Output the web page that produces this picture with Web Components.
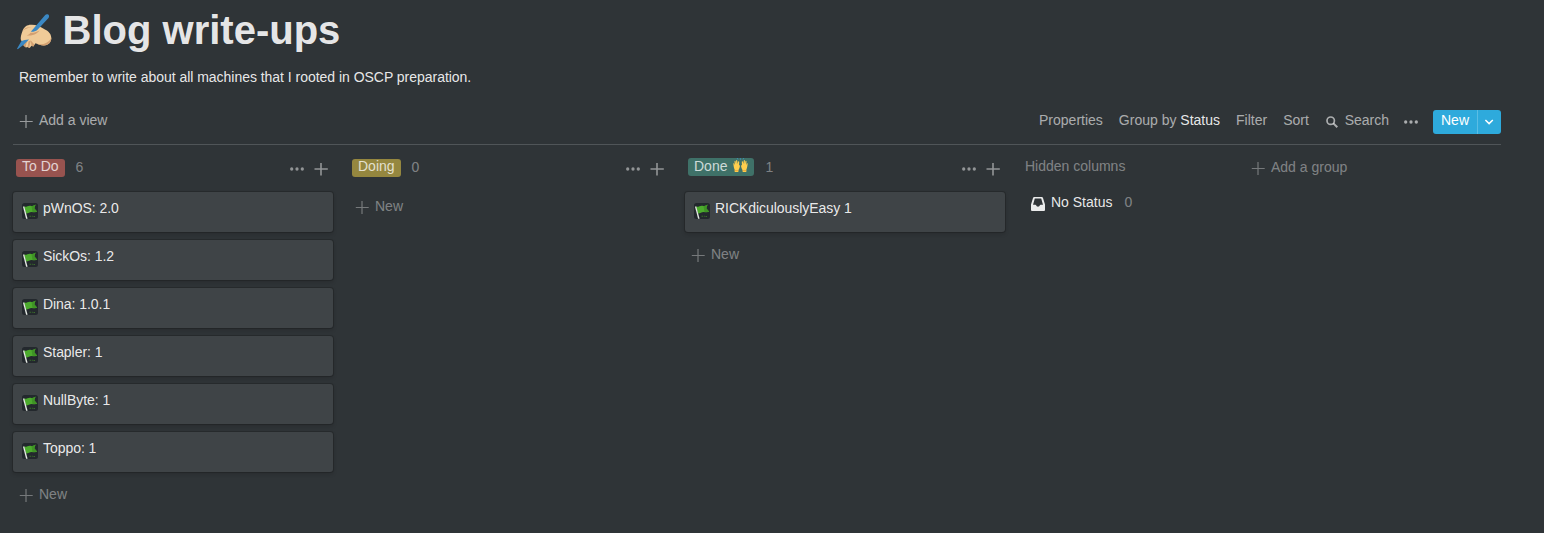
<!DOCTYPE html>
<html lang="en">
<head>
<meta charset="utf-8">
<title>Blog write-ups</title>
<style>
  html, body { margin: 0; height: 100%; background: #2f3437; overflow: hidden; }
  body { font: 14px/21px "Liberation Sans", Arial, sans-serif; color: rgba(255,255,255,.9); }
</style>
</head>
<body>
<blog-page></blog-page>
<script>
const define = (name, html) => {
  const tpl = document.createElement('template');
  tpl.innerHTML = html;
  customElements.define(name, class extends HTMLElement {
    constructor() {
      super();
      this.attachShadow({ mode: 'open' }).appendChild(tpl.content.cloneNode(true));
    }
  });
};

/* ---------- icons ---------- */
const ICONS = {
  plus: [13, 13, '<path d="M5.4 0h1.2v5.9h6.100v1.200H6.600V13H5.400V7.100H-.2V5.900H5.400z" fill="currentColor" opacity=".85"/>'],
  plusBold: [13, 13, '<path d="M5.2 0h1.600v5.200h6v1.600h-6V12.600H5.200V6.800H-.5V5.200h5.700z" fill="currentColor"/>'],
  dots: [14, 4, '<g fill="currentColor"><circle cx="1.7" cy="2" r="1.65"/><circle cx="7" cy="2" r="1.65"/><circle cx="12.3" cy="2" r="1.65"/></g>'],
  search: [12, 12, '<g fill="none" stroke="currentColor"><circle cx="4.7" cy="4.7" r="3.7" stroke-width="1.7"/><path d="M7.4 7.4l3.9 3.9" stroke-width="2"/></g>'],
  chevron: [9, 6, '<path d="M.4 1l3.7 3.6L7.8 1" fill="none" stroke="currentColor" stroke-width="1.5"/>'],
  tray: [14, 14, '<path fill="currentColor" fill-rule="evenodd" d="M3.2 0H10.8Q11.7 0 12 .9L14 7.6V13Q14 14 13 14H1Q0 14 0 13V7.6L2 .9Q2.3 0 3.2 0zM3.8 1.5L2 7.700H4.400Q5 7.700 5.100 8.300Q5.500 9.700 7 9.700Q8.500 9.700 8.900 8.300Q9 7.700 9.600 7.700H12L10.200 1.500z"/>'],
  flag: [16, 16, '<rect width="16" height="16" rx="2.5" fill="#23282d"/><path d="M1.800 3.600C4.500 4.600 6 2.200 8.500 2.800C10.500 3.300 12 3 13.600 1.600L12.300 5.200L15.200 8.700C13.500 9.500 11.500 9 9.500 8.900C7.500 8.900 6.500 10.400 4 10.400z" fill="#4cab2d"/><path d="M9.500 2.900C11 3.300 12.300 2.800 13.600 1.600L12.300 5.200L15.200 8.700C13.500 9.400 12 9 10.500 8.900z" fill="#3f9425"/><path d="M1 3.700L2.200 3.300L5.600 15.700H4.100z" fill="#e6eae5"/><path d="M7.500 13.200h1.700M10 13.200h.8M11.500 13.500h1.500" stroke="#3a6b2b" stroke-width="1.1"/>'],
  hands: [15, 15, '<g fill="#ffcf4d"><path d="M.4 6.200C0 5.300 1 5 1.300 5.800l.6 1.400L1.500 3.500c-.1-.9.900-1 1.100-.2l.5 2.600V2.700c0-.8 1.100-.8 1.200 0l.3 3.400.5-2.300c.2-.8 1.200-.6 1.100.2L6 8.200l.3-.8c.3-.7.8-.4.7.2-.2 1.900-.7 3.400-1.500 4.300L5.300 14H1.700l-.1-2.500C.8 10 .7 8 .4 6.200z"/><path d="M14.600 6.200c.4-.9-.6-1.200-.9-.4l-.6 1.400.4-3.700c.1-.9-.9-1-1.100-.2l-.5 2.600V2.700c0-.8-1.100-.8-1.200 0l-.3 3.400-.5-2.300c-.2-.8-1.200-.6-1.100.2L9 8.200l-.3-.8c-.3-.7-.8-.4-.7.2.2 1.900.7 3.400 1.500 4.300l.2 2.100h3.600l.1-2.500c.8-1.500.9-3.500 1.200-5.300z"/></g><path d="M4.200 0l.7 1.500M10.800 0l-.7 1.500M7.500 .2v1.600" stroke="#3f91b5" stroke-width=".9"/><path d="M1.800 12.600h3.500M9.700 12.600h3.500" stroke="#e69a35" stroke-width=".7"/>'],
  writing: [36, 36, '<path d="M6.500 17C8 12.500 11.500 10.500 15.500 10.700C20 10.600 24.500 12.500 28.500 15.200C32.500 17 35.500 20 35.300 24.500C35 28.500 32 31.300 28 31.500C25 31.600 22 30 19.500 29.200L17.300 32.500L15.500 31.800L13.700 34L11.500 33L10 33.500L7.500 31.500L8 28L5 26.500C4 23.500 5.500 20 6.500 17z" fill="#f0cb98"/><path d="M19.500 29.200C23.500 30.600 27 30.600 30 29C33 27.500 34.600 25.700 35.300 23.500C35.600 28 32.500 31.400 28 31.500C25 31.600 22 30 19.500 29.200zM8 28L12.500 25.500L10.500 29L9.700 33.400L7.500 31.500zM14.800 26.500L18.500 30.700L17.300 32.500L15.500 31.800zM12.500 27.500L14.800 26.500L13.200 33.700L11.500 33zM14.500 18.800C17.500 19 20 18.300 23.500 16.500C21 20 17 21.700 10.500 21.700C12 21.200 13.500 20.300 14.500 18.800zM6.500 17C8 14.200 11 12.800 15.500 13.300C11.500 13.900 8.500 15.300 6.500 17z" fill="#d3a071"/><path d="M29 1.200C29.900 .1 31.300-.2 32.300.6C33.300 1.400 33.400 2.800 32.500 3.900L21.500 15.700C19.800 17.200 17.200 18.100 14.800 17.800z" fill="#3b88c3"/><path d="M5.300 27.200C7.500 26 9.800 25.700 13 25.500L8.200 30.200L1.700 35.300L1 34.700z" fill="#3b88c3"/>']
};
customElements.define('ui-icon', class extends HTMLElement {
  constructor() { super(); this.attachShadow({ mode: 'open' }); }
  connectedCallback() {
    const [w, h, body] = ICONS[this.getAttribute('name')];
    this.shadowRoot.innerHTML = `<style>:host{display:block;flex:none}svg{display:block;overflow:visible}</style>
      <svg width="${w}" height="${h}" viewBox="0 0 ${w} ${h}">${body}</svg>`;
  }
});

/* ---------- header ---------- */
define('page-header', `
  <style>
    :host { display: block; padding: 6px 0 0 16px; }
    .row { display: flex; align-items: flex-start; height: 48px; gap: 10.6px; }
    ui-icon { margin-top: 8px; }
    h1 { margin: 0; font-size: 40px; line-height: 48px; font-weight: 700; white-space: nowrap; }
    p { margin: 13px 0 0 3px; letter-spacing: -.028px; }
  </style>
  <div class="row"><ui-icon name="writing"></ui-icon><h1><slot name="title"></slot></h1></div>
  <p><slot></slot></p>`);

/* ---------- toolbar ---------- */
define('split-button', `
  <style>
    :host { display: flex; width: 68px; height: 24px; border-radius: 3px; background: #2eaadc; color: #fff; overflow: hidden; }
    .main { box-sizing: border-box; width: 44px; padding-left: 8px; line-height: 21px; }
    .more { flex: 1; display: flex; align-items: center; justify-content: center; border-left: 1px solid #5bbde4; }
  </style>
  <span class="main"><slot></slot></span><span class="more"><ui-icon name="chevron"></ui-icon></span>`);

define('board-toolbar', `
  <style>
    :host { display: flex; box-sizing: border-box; height: 35px; margin: 22px 43px 0 13px; padding-left: 7px;
            border-bottom: 1px solid #505558; color: rgba(255,255,255,.6); white-space: nowrap; align-items: flex-start; }
    .add, .right, .search { display: flex; align-items: flex-start; }
    .add { gap: 6px; } .add ui-icon { margin-top: 5px; }
    .right { margin-left: auto; gap: 16px; }
    .search { gap: 7px; margin-left: .8px; } .search ui-icon { margin-top: 6px; }
    .dots { margin: 10px -1px 0 -1px; }
    b { font-weight: 400; color: rgba(255,255,255,.9); }
  </style>
  <span class="add"><ui-icon name="plus"></ui-icon><span>Add a view</span></span>
  <div class="right">
    <span>Properties</span><span>Group by <b>Status</b></span><span>Filter</span><span>Sort</span>
    <span class="search"><ui-icon name="search"></ui-icon><span>Search</span></span>
    <ui-icon class="dots" name="dots"></ui-icon>
    <split-button>New</split-button>
  </div>`);

/* ---------- board ---------- */
define('status-tag', `
  <style>
    :host { display: flex; height: 18px; line-height: var(--tag-line, 14px); padding: 0 6px; border-radius: 3px; background: var(--tag); white-space: nowrap; gap: 6px; color: rgba(255,255,255,.75); }
  </style>
  <slot></slot>`);

define('board-card', `
  <style>
    :host { display: flex; box-sizing: border-box; height: 40px; padding: 6px 9px; gap: 5px; border-radius: 3px; background: #3f4447;
            box-shadow: 0 0 0 1px rgba(15,15,15,.22), 0 2px 4px rgba(15,15,15,.2); margin-bottom: 8px; white-space: nowrap; letter-spacing: -.05px; }
    ui-icon { margin-top: 5px; }
  </style>
  <ui-icon name="flag"></ui-icon><span><slot></slot></span>`);

define('add-row', `
  <style>
    :host { display: flex; gap: 6px; padding-left: 7px; color: rgba(255,255,255,.4); white-space: nowrap; }
    ui-icon { margin-top: 5px; }
  </style>
  <ui-icon name="plus"></ui-icon><span><slot></slot></span>`);

define('board-column', `
  <style>
    :host { display: block; width: 320px; margin-right: 16px; flex: none; }
    header { display: flex; height: 33px; padding-left: 3px; align-items: flex-start; color: rgba(255,255,255,.4); }
    .tag { margin-top: var(--tag-top, 0px); }
    .count { margin-left: 11px; margin-top: -2px; }
    .dots { margin: 8px 11px 0 auto; color: rgba(255,255,255,.48); }
    .plus { margin: 4px 5px 0 0; color: rgba(255,255,255,.48); }
    .cards { display: flex; flex-direction: column; }
    add-row { padding-top: 4px; }
  </style>
  <header><span class="tag"><slot name="tag"></slot></span><span class="count"><slot name="count"></slot></span>
    <ui-icon class="dots" name="dots"></ui-icon><ui-icon class="plus" name="plusBold"></ui-icon></header>
  <div class="cards"><slot></slot></div>
  <add-row>New</add-row>`);

define('hidden-columns', `
  <style>
    :host { display: block; width: 220px; margin-left: 4px; margin-top: -3px; flex: none; color: rgba(255,255,255,.4); }
    .row { display: flex; margin-top: 15px; padding-left: 6px; }
    ui-icon { margin: 5px 6px 0 0; color: rgba(255,255,255,.9); }
    b { font-weight: 400; color: rgba(255,255,255,.9); margin-right: 12px; }
  </style>
  <div>Hidden columns</div>
  <div class="row"><ui-icon name="tray"></ui-icon><b>No Status</b><span>0</span></div>`);

define('blog-page', `
  <style>
    :host { display: block; width: 1544px; height: 533px; overflow: hidden; }
    .board { display: flex; align-items: flex-start; padding: 14px 0 0 13px; }
    .group { margin-top: -2px; }
  </style>
  <page-header><span slot="title">Blog write-ups</span>Remember to write about all machines that I rooted in OSCP preparation.</page-header>
  <board-toolbar></board-toolbar>
  <div class="board">
    <board-column>
      <status-tag slot="tag" style="--tag:#98534f">To Do</status-tag><span slot="count">6</span>
      <board-card>pWnOS: 2.0</board-card>
      <board-card>SickOs: 1.2</board-card>
      <board-card>Dina: 1.0.1</board-card>
      <board-card>Stapler: 1</board-card>
      <board-card>NullByte: 1</board-card>
      <board-card>Toppo: 1</board-card>
    </board-column>
    <board-column>
      <status-tag slot="tag" style="--tag:#95873f">Doing</status-tag><span slot="count">0</span>
    </board-column>
    <board-column style="--tag-top:-1px">
      <status-tag slot="tag" style="--tag:#3f7168;--tag-line:16px"><span>Done</span><ui-icon name="hands"></ui-icon></status-tag><span slot="count">1</span>
      <board-card>RICKdiculouslyEasy 1</board-card>
    </board-column>
    <hidden-columns></hidden-columns>
    <add-row class="group">Add a group</add-row>
  </div>`);
</script>
</body>
</html>
